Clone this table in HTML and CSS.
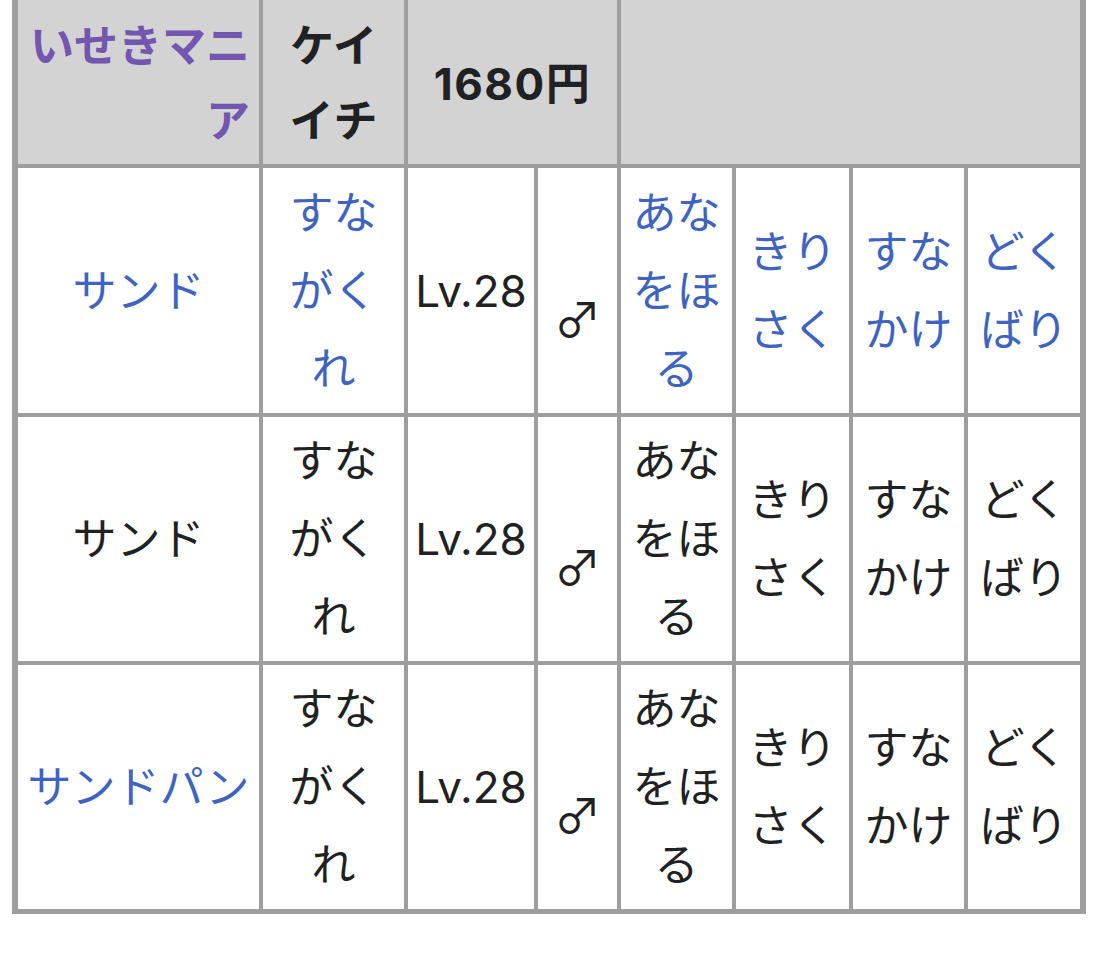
FILE: index.html
```html
<!DOCTYPE html>
<html lang="ja">
<head>
<meta charset="utf-8">
<title>いせきマニア</title>
<link rel="stylesheet" href="styles.css">
</head>
<body>
<div class="trainer-table">
  <div class="cell head head-name"><span class="visited">いせきマニア</span></div>
  <div class="cell head">ケイイチ</div>
  <div class="cell head span2 price">1680円</div>
  <div class="cell head span4"></div>

  <div class="cell"><span class="link">サンド</span></div>
  <div class="cell"><span class="link">すながくれ</span></div>
  <div class="cell lv">Lv.28</div>
  <div class="cell gender">♂</div>
  <div class="cell"><span class="link">あなをほる</span></div>
  <div class="cell"><span class="link">きりさく</span></div>
  <div class="cell"><span class="link">すなかけ</span></div>
  <div class="cell"><span class="link">どくばり</span></div>

  <div class="cell">サンド</div>
  <div class="cell">すながくれ</div>
  <div class="cell lv">Lv.28</div>
  <div class="cell gender">♂</div>
  <div class="cell">あなをほる</div>
  <div class="cell">きりさく</div>
  <div class="cell">すなかけ</div>
  <div class="cell">どくばり</div>

  <div class="cell"><span class="link">サンドパン</span></div>
  <div class="cell">すながくれ</div>
  <div class="cell lv">Lv.28</div>
  <div class="cell gender">♂</div>
  <div class="cell">あなをほる</div>
  <div class="cell">きりさく</div>
  <div class="cell">すなかけ</div>
  <div class="cell">どくばり</div>
</div>
</body>
</html>
```

FILE: styles.css
```css
html, body {
  margin: 0;
  padding: 0;
  background: #ffffff;
}

body {
  font-family: "Inter", "Noto Sans CJK JP", sans-serif;
  font-size: 44px;
  line-height: 78px;
  color: #202122;
}

.trainer-table {
  display: grid;
  grid-template-columns: 241px 141px 126px 79px 111px 113px 111px 112px;
  grid-template-rows: 164px 245px 244px 244px;
  gap: 4px;
  width: 1062px;
  margin: 0 0 0 12px;
  padding: 0 6px 5px 6px;
  background: #9e9e9e;
}

.cell {
  background: #ffffff;
  display: flex;
  align-items: center;
  justify-content: center;
  text-align: center;
  padding: 0 6px;
  overflow: hidden;
}

.head {
  background: #d3d3d3;
  font-weight: 700;
  line-height: 75px;
  padding-top: 4px;
}

.head-name {
  justify-content: flex-end;
  text-align: right;
  padding-right: 9px;
}

.price {
  letter-spacing: 1.5px;
}

.span2 {
  grid-column: span 2;
}

.span4 {
  grid-column: span 4;
}

.visited {
  color: #7256b0;
}

.link {
  color: #3e63c1;
}

.lv {
  padding: 0 2px;
}

.gender {
  font-family: "Noto Sans CJK JP", sans-serif;
  font-size: 47px;
  padding-top: 52px;
}
```
